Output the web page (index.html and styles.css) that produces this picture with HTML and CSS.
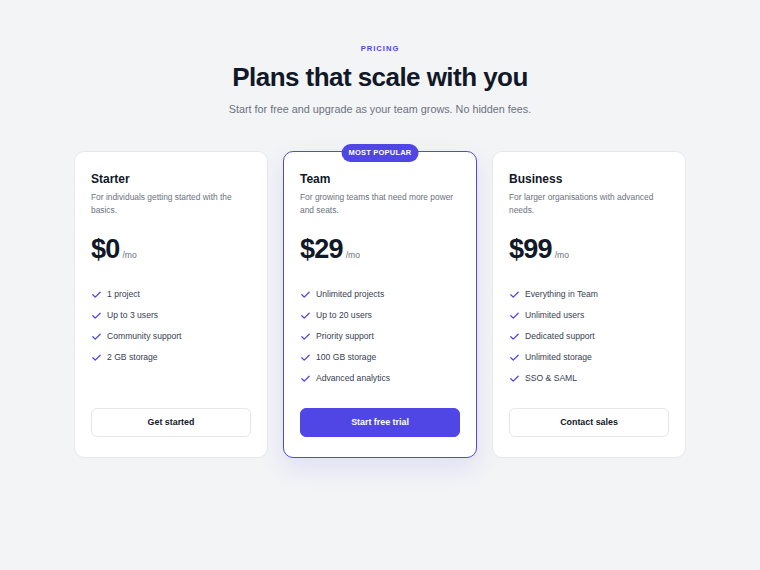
FILE: index.html
```html
<!DOCTYPE html>
<html>
<head>
<meta charset="utf-8">
<link rel="stylesheet" href="styles.css">
</head>
<body>
<main class="page">
  <header class="head">
    <div class="eyebrow">PRICING</div>
    <h1 class="title">Plans that scale with you</h1>
    <p class="sub">Start for free and upgrade as your team grows. No hidden fees.</p>
  </header>
  <section class="plans">
    <article class="card">
      <h2 class="name">Starter</h2>
      <p class="desc">For individuals getting started with the basics.</p>
      <div class="price"><span class="amount">$0</span><span class="per">/mo</span></div>
      <ul class="features">
        <li><svg class="check" viewBox="0 0 12 12"><path d="M2 6.3l2.6 2.6L10 3.5"/></svg>1 project</li>
        <li><svg class="check" viewBox="0 0 12 12"><path d="M2 6.3l2.6 2.6L10 3.5"/></svg>Up to 3 users</li>
        <li><svg class="check" viewBox="0 0 12 12"><path d="M2 6.3l2.6 2.6L10 3.5"/></svg>Community support</li>
        <li><svg class="check" viewBox="0 0 12 12"><path d="M2 6.3l2.6 2.6L10 3.5"/></svg>2 GB storage</li>
      </ul>
      <button class="btn">Get started</button>
    </article>
    <article class="card featured">
      <span class="badge">MOST POPULAR</span>
      <h2 class="name">Team</h2>
      <p class="desc">For growing teams that need more power and seats.</p>
      <div class="price"><span class="amount">$29</span><span class="per">/mo</span></div>
      <ul class="features">
        <li><svg class="check" viewBox="0 0 12 12"><path d="M2 6.3l2.6 2.6L10 3.5"/></svg>Unlimited projects</li>
        <li><svg class="check" viewBox="0 0 12 12"><path d="M2 6.3l2.6 2.6L10 3.5"/></svg>Up to 20 users</li>
        <li><svg class="check" viewBox="0 0 12 12"><path d="M2 6.3l2.6 2.6L10 3.5"/></svg>Priority support</li>
        <li><svg class="check" viewBox="0 0 12 12"><path d="M2 6.3l2.6 2.6L10 3.5"/></svg>100 GB storage</li>
        <li><svg class="check" viewBox="0 0 12 12"><path d="M2 6.3l2.6 2.6L10 3.5"/></svg>Advanced analytics</li>
      </ul>
      <button class="btn primary">Start free trial</button>
    </article>
    <article class="card">
      <h2 class="name">Business</h2>
      <p class="desc">For larger organisations with advanced needs.</p>
      <div class="price"><span class="amount">$99</span><span class="per">/mo</span></div>
      <ul class="features">
        <li><svg class="check" viewBox="0 0 12 12"><path d="M2 6.3l2.6 2.6L10 3.5"/></svg>Everything in Team</li>
        <li><svg class="check" viewBox="0 0 12 12"><path d="M2 6.3l2.6 2.6L10 3.5"/></svg>Unlimited users</li>
        <li><svg class="check" viewBox="0 0 12 12"><path d="M2 6.3l2.6 2.6L10 3.5"/></svg>Dedicated support</li>
        <li><svg class="check" viewBox="0 0 12 12"><path d="M2 6.3l2.6 2.6L10 3.5"/></svg>Unlimited storage</li>
        <li><svg class="check" viewBox="0 0 12 12"><path d="M2 6.3l2.6 2.6L10 3.5"/></svg>SSO &amp; SAML</li>
      </ul>
      <button class="btn">Contact sales</button>
    </article>
  </section>
</main>
</body>
</html>
```
FILE: styles.css
```css
* { box-sizing: border-box; }
html, body { margin: 0; padding: 0; }
body {
  background: #f3f4f6;
  font-family: "Liberation Sans", Arial, sans-serif;
  color: #111827;
  width: 760px;
  height: 570px;
}
.page {
  padding-top: 44px;
}
.head {
  text-align: center;
}
.eyebrow {
  font-size: 7.6px;
  line-height: 10px;
  font-weight: 700;
  letter-spacing: 1px;
  color: #4f46e5;
}
.title {
  margin: 8px 0 0;
  font-size: 26px;
  line-height: 30px;
  font-weight: 700;
  letter-spacing: -0.55px;
  color: #111827;
}
.sub {
  margin: 10px 0 0;
  font-size: 10.8px;
  line-height: 14px;
  color: #6b7280;
}
.plans {
  width: 612px;
  margin: 35px auto 0;
  display: grid;
  grid-template-columns: repeat(3, 1fr);
  gap: 15px;
  align-items: stretch;
}
.card {
  position: relative;
  background: #fff;
  border: 1px solid #e5e7eb;
  border-radius: 10px;
  padding: 20px 16px 20px;
  display: flex;
  flex-direction: column;
}
.card.featured {
  border: 1.5px solid #5048e5;
  box-shadow: 0 10px 24px rgba(79, 70, 229, 0.12);
}
.badge {
  position: absolute;
  top: -8px;
  left: 50%;
  transform: translateX(-50%);
  background: #4f46e5;
  color: #fff;
  font-size: 7.5px;
  font-weight: 700;
  letter-spacing: 0.2px;
  line-height: 18px;
  height: 18px;
  padding: 0 7px;
  border-radius: 9px;
  white-space: nowrap;
}
.name {
  margin: 0;
  font-size: 12px;
  line-height: 15px;
  font-weight: 700;
  color: #111827;
}
.desc {
  margin: 3.5px 0 0;
  font-size: 8.4px;
  line-height: 13px;
  color: #6b7280;
}
.price {
  margin-top: 19.5px;
  display: flex;
  align-items: baseline;
}
.amount {
  font-size: 27px;
  line-height: 27px;
  font-weight: 700;
  letter-spacing: -0.8px;
  color: #111827;
}
.per {
  margin-left: 3px;
  font-size: 8.6px;
  color: #6b7280;
}
.features {
  list-style: none;
  margin: 24.5px 0 23px;
  padding: 0;
  display: flex;
  flex-direction: column;
  gap: 8px;
}
.features li {
  display: flex;
  align-items: center;
  gap: 5px;
  font-size: 8.6px;
  line-height: 13px;
  color: #374151;
}
.check {
  width: 11px;
  height: 11px;
  flex: none;
  fill: none;
  stroke: #4f46e5;
  stroke-width: 1.4;
  stroke-linecap: round;
  stroke-linejoin: round;
}
.btn {
  margin-top: auto;
  height: 29px;
  width: 100%;
  border: 1px solid #e5e7eb;
  border-radius: 6px;
  background: #fff;
  font-family: inherit;
  font-size: 8.9px;
  font-weight: 700;
  color: #111827;
}
.btn.primary {
  background: #4f46e5;
  border-color: #4f46e5;
  color: #fff;
}
```
